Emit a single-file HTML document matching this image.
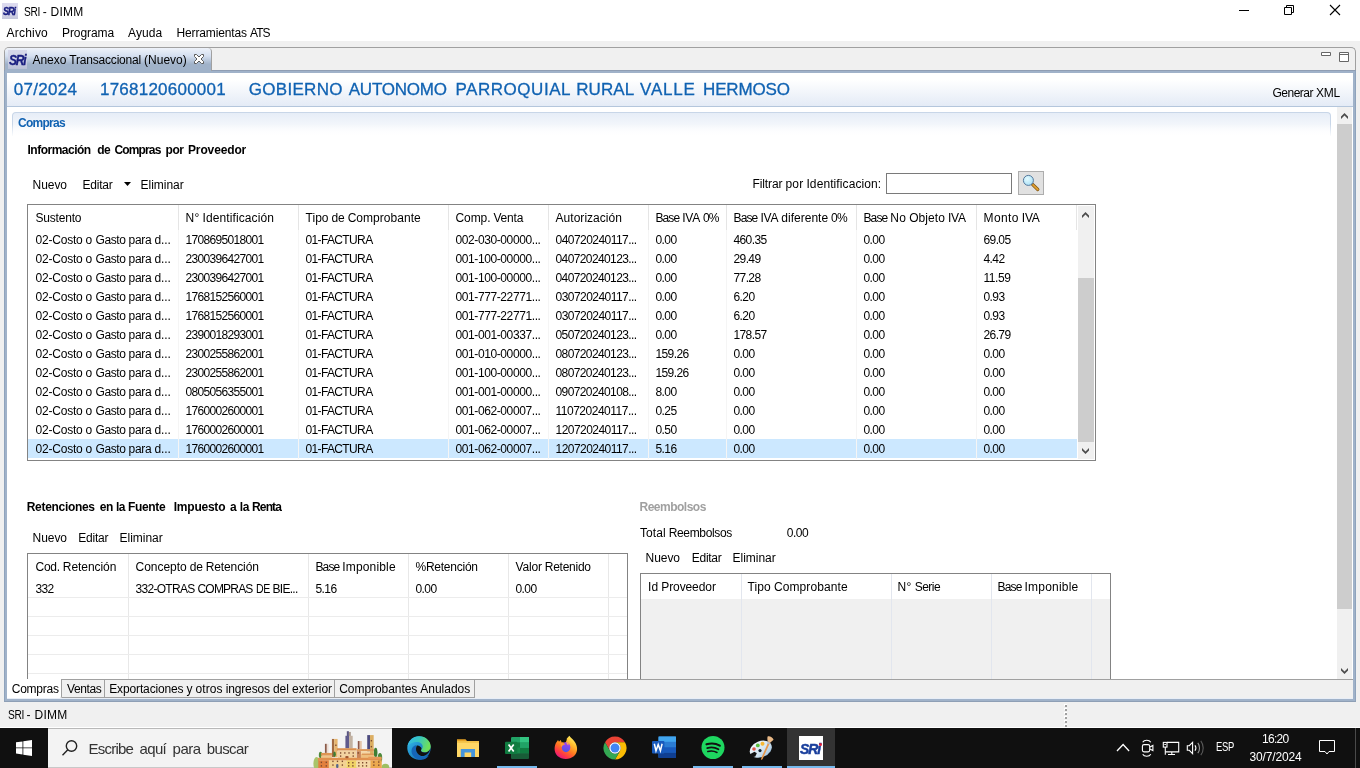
<!DOCTYPE html>
<html lang="es"><head><meta charset="utf-8"><title>SRI - DIMM</title>
<style>
*{box-sizing:border-box;margin:0;padding:0}
html,body{width:1360px;height:768px;overflow:hidden;background:#f0f0f0}
body{position:relative;will-change:transform;font-family:"Liberation Sans",sans-serif;font-size:12px;color:#000;line-height:16px}
.a{position:absolute;white-space:nowrap}
.t{position:absolute;white-space:pre;height:16px;line-height:16px}
.b{font-weight:bold}
svg{position:absolute;overflow:visible}
.vl{position:absolute;width:1px;background:#e5e5e5}
.hl{position:absolute;height:1px;background:#ececec}
</style></head>
<body>
<div class="a" style="left:0px;top:0px;width:1360px;height:41px;background:#fff"></div>
<div class="a" style="left:2px;top:3px;width:16px;height:16px;background:linear-gradient(#dddbef 0%,#d6d5ea 60%,#c4c6da 100%);overflow:hidden"><span class="a" style="left:1.2px;top:3.5px;font-size:10px;line-height:10px;font-weight:bold;font-style:italic;color:#1a1f80;-webkit-text-stroke:0.35px #1a1f80;letter-spacing:-1.1px;transform-origin:0 0;transform:scaleX(0.9)">SRi</span></div>
<div class="t" style="left:23.80px;top:4px;"><span style="display:inline-block;letter-spacing:-0.4px;transform-origin:0 0;transform:scaleX(0.8453);margin-right:-2.909px">SRI</span><span style="letter-spacing:-0.369px"> </span><span style="letter-spacing:0.969px">-</span><span style="letter-spacing:-0.369px"> </span><span style="letter-spacing:0.217px">DIMM</span></div>
<svg style="left:1230px;top:0" width="130" height="22" viewBox="0 0 130 22"><path d="M9 10.500h10" stroke="#000" stroke-width="1" fill="none"/><path d="M54.500 7.500h7v7h-7z M56.500 7.500v-2h7v7h-2" stroke="#000" stroke-width="1" fill="none"/><path d="M100 5l10 10M110 5l-10 10" stroke="#000" stroke-width="1.1" fill="none"/></svg>
<div class="t" style="left:6.60px;top:25px;letter-spacing:0.191px">Archivo</div>
<div class="t" style="left:62.00px;top:25px;letter-spacing:-0.067px">Programa</div>
<div class="t" style="left:128.00px;top:25px;letter-spacing:0.088px">Ayuda</div>
<div class="t" style="left:176.50px;top:25px;"><span style="letter-spacing:-0.132px">Herramientas</span><span style="letter-spacing:-0.381px"> </span><span style="letter-spacing:-0.863px">ATS</span></div>
<div class="a" style="left:4px;top:47px;width:1352px;height:655px;background:#f0f0f0;border:1px solid #a0a0a0;border-radius:5px 5px 0 0;border-bottom:none"></div>
<div class="a" style="left:4px;top:70px;width:1352px;height:632px;background:#a0b2c9;border-left:1px solid #8fa3bc;border-right:1px solid #8fa3bc"></div>
<div class="a" style="left:4px;top:70px;width:1352px;height:1px;background:#8f9db3"></div>
<div class="a" style="left:5px;top:48px;width:207px;height:23px;background:linear-gradient(#eef2f9 0%,#d4dff0 35%,#a0b2c9 70%,#a0b2c9 100%);border-radius:4px 4px 0 0;border-right:1px solid #a0a0a0"></div>
<div class="a" style="left:8px;top:50px;width:19px;height:19px;background:linear-gradient(#d6d8ea 0%,#cdd0e4 60%,#b9c0d6 100%);overflow:hidden"><span class="a" style="left:1px;top:2.5px;font-size:14px;line-height:14px;font-weight:bold;font-style:italic;color:#1a1f80;-webkit-text-stroke:0.35px #1a1f80;letter-spacing:-1.5px;transform-origin:0 0;transform:scaleX(0.86)">SRi</span></div>
<div class="t" style="left:32.50px;top:52px;"><span style="letter-spacing:-0.033px">Anexo</span><span style="letter-spacing:-0.362px"> </span><span style="letter-spacing:-0.201px">Transaccional</span><span style="letter-spacing:-0.362px"> </span><span style="letter-spacing:0.018px">(Nuevo)</span></div>
<svg style="left:194px;top:54px" width="10" height="10" viewBox="0 0 10 10"><path d="M.5.500h2l2.500 2.500 2.500-2.500h2v2L7 5l2.500 2.500v2h-2L5 7 2.500 9.500h-2v-2L3 5 .5 2.500z" fill="#fff" stroke="#5a5a5a" stroke-width="1"/></svg>
<svg style="left:1320px;top:51px" width="32" height="14" viewBox="0 0 32 14"><path d="M1.500 1.500h9v3h-9z" fill="#fff" stroke="#666"/><path d="M19.500 1.500h9v9h-9z M19.500 3.500h9" fill="#fff" stroke="#666"/></svg>
<div class="a" style="left:7px;top:73px;width:1346px;height:606px;background:#fff"></div>
<div class="a" style="left:7px;top:73px;width:1346px;height:33px;background:linear-gradient(#ffffff 0%,#ffffff 20%,#e4ebf6 100%)"></div>
<div class="a" style="left:7px;top:106px;width:1346px;height:1px;background:#b4c6dc"></div>
<div class="t" style="left:0;top:78px;font-size:17px;height:23px;line-height:23px;color:#1062b2;-webkit-text-stroke:0.3px #1062b2;"><span style="position:absolute;left:13.75px;letter-spacing:0.292px">07/2024</span> <span style="position:absolute;left:100.00px;letter-spacing:0.232px">1768120600001</span> <span style="position:absolute;left:248.75px;letter-spacing:0.300px">GOBIERNO</span> <span style="position:absolute;left:348.75px;letter-spacing:-0.226px">AUTONOMO</span> <span style="position:absolute;left:455.50px;letter-spacing:0.527px">PARROQUIAL</span> <span style="position:absolute;left:576.25px;letter-spacing:0.082px">RURAL</span> <span style="position:absolute;left:640.00px;letter-spacing:0.824px">VALLE</span> <span style="position:absolute;left:703.00px;letter-spacing:-0.145px">HERMOSO</span></div>
<div class="t" style="left:1272.50px;top:85px;"><span style="letter-spacing:-0.500px">Generar</span><span style="letter-spacing:-0.402px"> </span><span style="letter-spacing:-0.293px">XML</span></div>
<div class="a" style="left:1337px;top:107px;width:15px;height:572px;background:#f0f0f0"></div>
<div class="a" style="left:1337px;top:124px;width:15px;height:485px;background:#cdcdcd"></div>
<svg style="left:0;top:0" width="1360" height="768" viewBox="0 0 1360 768"><path d="M1341.0 116.5L1344.5 113L1348.0 116.5V119L1344.5 115.5L1341.0 119z" fill="#4d4d4d"/><path d="M1341.0 668L1344.5 671.5L1348.0 668V670.5L1344.5 674L1341.0 670.5z" fill="#4d4d4d"/></svg>
<div class="a" style="left:12px;top:112px;width:1319px;height:24px;border:1px solid #c8d6e8;border-bottom:none;border-radius:4px 4px 0 0;background:linear-gradient(#e6edf7 0%,#ffffff 100%)"></div>
<div class="a" style="left:12px;top:124px;width:1319px;height:13px;background:linear-gradient(to bottom,rgba(255,255,255,0),#fff)"></div>
<div class="t b" style="left:18.00px;top:115px;color:#1062b2;letter-spacing:-0.744px">Compras</div>
<div class="t b" style="left:0;top:142px;"><span style="position:absolute;left:27.50px;letter-spacing:-0.497px">Información</span> <span style="position:absolute;left:97.27px;letter-spacing:-0.499px">de</span> <span style="position:absolute;left:114.50px;letter-spacing:-0.869px">Compras</span> <span style="position:absolute;left:165.61px;letter-spacing:-0.499px">por</span> <span style="position:absolute;left:188.00px;letter-spacing:-0.133px">Proveedor</span></div>
<div class="t" style="left:32.50px;top:177px;letter-spacing:-0.038px">Nuevo</div>
<div class="t" style="left:82.50px;top:177px;letter-spacing:-0.225px">Editar</div>
<div class="t" style="left:140.50px;top:177px;letter-spacing:-0.011px">Eliminar</div>
<svg style="left:124px;top:182px" width="7" height="4" viewBox="0 0 7 4"><path d="M0 0h7l-3.500 4z" fill="#000"/></svg>
<div class="t" style="left:752.50px;top:176px;"><span style="letter-spacing:-0.104px">Filtrar</span><span style="letter-spacing:-0.343px"> </span><span style="letter-spacing:0.209px">por</span><span style="letter-spacing:-0.343px"> </span><span style="letter-spacing:0.099px">Identificacion:</span></div>
<div class="a" style="left:886px;top:173px;width:126px;height:21px;background:#fff;border:1px solid #7a7a7a"></div>
<div class="a" style="left:1018px;top:171px;width:26px;height:24px;background:#e1e1e1;border:1px solid #adadad"></div>
<svg style="left:1021px;top:174px" width="20" height="18" viewBox="0 0 20 18"><defs><radialGradient id="mg" cx="0.4" cy="0.35" r="0.7"><stop offset="0" stop-color="#e4fbff"/><stop offset="1" stop-color="#a9e0f6"/></radialGradient></defs><path d="M11.500 10.300l5.300 5.200" stroke="#7a5214" stroke-width="3.200" stroke-linecap="round"/><path d="M12 10.800l4.800 4.700" stroke="#e0a030" stroke-width="1.800" stroke-linecap="round"/><circle cx="7.400" cy="6.400" r="5" fill="url(#mg)" stroke="#55789c" stroke-width="1"/></svg>
<div class="a" style="left:27px;top:204px;width:1069px;height:257px;background:#fff;border:1px solid #838383"></div>
<div class="t" style="left:35.50px;top:210px;letter-spacing:-0.202px">Sustento</div>
<div class="t" style="left:185.50px;top:210px;"><span style="letter-spacing:0.238px">N°</span><span style="letter-spacing:-0.363px"> </span><span style="letter-spacing:0.110px">Identificación</span></div>
<div class="t" style="left:305.50px;top:210px;"><span style="letter-spacing:0.039px">Tipo</span><span style="letter-spacing:-0.321px"> </span><span style="letter-spacing:-0.161px">de</span><span style="letter-spacing:-0.321px"> </span><span style="letter-spacing:0.040px">Comprobante</span></div>
<div class="t" style="left:455.50px;top:210px;"><span style="letter-spacing:-0.091px">Comp.</span><span style="letter-spacing:-0.357px"> </span><span style="letter-spacing:-0.162px">Venta</span></div>
<div class="t" style="left:555.50px;top:210px;letter-spacing:0.039px">Autorización</div>
<div class="t" style="left:655.50px;top:210px;"><span style="letter-spacing:-0.906px">Base</span><span style="letter-spacing:-0.402px"> </span><span style="letter-spacing:-0.219px">IVA</span><span style="letter-spacing:-0.402px"> </span><span style="letter-spacing:-0.740px">0%</span></div>
<div class="t" style="left:733.50px;top:210px;"><span style="letter-spacing:-0.862px">Base</span><span style="letter-spacing:-0.358px"> </span><span style="letter-spacing:-0.174px">IVA</span><span style="letter-spacing:-0.358px"> </span><span style="letter-spacing:0.010px">diferente</span><span style="letter-spacing:-0.358px"> </span><span style="letter-spacing:-0.696px">0%</span></div>
<div class="t" style="left:863.50px;top:210px;"><span style="letter-spacing:-0.880px">Base</span><span style="letter-spacing:-0.376px"> </span><span style="letter-spacing:0.288px">No</span><span style="letter-spacing:-0.376px"> </span><span style="letter-spacing:0.066px">Objeto</span><span style="letter-spacing:-0.376px"> </span><span style="letter-spacing:-0.192px">IVA</span></div>
<div class="t" style="left:983.50px;top:210px;"><span style="letter-spacing:0.419px">Monto</span><span style="letter-spacing:-0.445px"> </span><span style="letter-spacing:-0.262px">IVA</span></div>
<div class="vl" style="left:178px;top:205px;height:25px"></div>
<div class="vl" style="left:298px;top:205px;height:25px"></div>
<div class="vl" style="left:448px;top:205px;height:25px"></div>
<div class="vl" style="left:548px;top:205px;height:25px"></div>
<div class="vl" style="left:648px;top:205px;height:25px"></div>
<div class="vl" style="left:726px;top:205px;height:25px"></div>
<div class="vl" style="left:856px;top:205px;height:25px"></div>
<div class="vl" style="left:976px;top:205px;height:25px"></div>
<div class="vl" style="left:1076px;top:205px;height:25px"></div>
<div class="t" style="left:35.50px;top:232px;"><span style="letter-spacing:-0.211px">02-Costo</span><span style="letter-spacing:-0.334px"> </span><span style="letter-spacing:0.326px">o</span><span style="letter-spacing:-0.334px"> </span><span style="letter-spacing:-0.403px">Gasto</span><span style="letter-spacing:-0.334px"> </span><span style="letter-spacing:-0.254px">para</span><span style="letter-spacing:-0.334px"> </span><span style="letter-spacing:-0.169px">d...</span></div>
<div class="t" style="left:185.50px;top:232px;letter-spacing:-0.674px">1708695018001</div>
<div class="t" style="left:305.50px;top:232px;letter-spacing:-0.635px">01-FACTURA</div>
<div class="t" style="left:455.50px;top:232px;letter-spacing:-0.400px">002-030-00000...</div>
<div class="t" style="left:555.50px;top:232px;letter-spacing:-0.546px">040720240117...</div>
<div class="t" style="left:655.50px;top:232px;letter-spacing:-0.589px">0.00</div>
<div class="t" style="left:733.50px;top:232px;letter-spacing:-0.617px">460.35</div>
<div class="t" style="left:863.50px;top:232px;letter-spacing:-0.589px">0.00</div>
<div class="t" style="left:983.50px;top:232px;letter-spacing:-0.606px">69.05</div>
<div class="t" style="left:35.50px;top:251px;"><span style="letter-spacing:-0.211px">02-Costo</span><span style="letter-spacing:-0.334px"> </span><span style="letter-spacing:0.326px">o</span><span style="letter-spacing:-0.334px"> </span><span style="letter-spacing:-0.403px">Gasto</span><span style="letter-spacing:-0.334px"> </span><span style="letter-spacing:-0.254px">para</span><span style="letter-spacing:-0.334px"> </span><span style="letter-spacing:-0.169px">d...</span></div>
<div class="t" style="left:185.50px;top:251px;letter-spacing:-0.674px">2300396427001</div>
<div class="t" style="left:305.50px;top:251px;letter-spacing:-0.635px">01-FACTURA</div>
<div class="t" style="left:455.50px;top:251px;letter-spacing:-0.400px">001-100-00000...</div>
<div class="t" style="left:555.50px;top:251px;letter-spacing:-0.606px">040720240123...</div>
<div class="t" style="left:655.50px;top:251px;letter-spacing:-0.589px">0.00</div>
<div class="t" style="left:733.50px;top:251px;letter-spacing:-0.606px">29.49</div>
<div class="t" style="left:863.50px;top:251px;letter-spacing:-0.589px">0.00</div>
<div class="t" style="left:983.50px;top:251px;letter-spacing:-0.589px">4.42</div>
<div class="t" style="left:35.50px;top:270px;"><span style="letter-spacing:-0.211px">02-Costo</span><span style="letter-spacing:-0.334px"> </span><span style="letter-spacing:0.326px">o</span><span style="letter-spacing:-0.334px"> </span><span style="letter-spacing:-0.403px">Gasto</span><span style="letter-spacing:-0.334px"> </span><span style="letter-spacing:-0.254px">para</span><span style="letter-spacing:-0.334px"> </span><span style="letter-spacing:-0.169px">d...</span></div>
<div class="t" style="left:185.50px;top:270px;letter-spacing:-0.674px">2300396427001</div>
<div class="t" style="left:305.50px;top:270px;letter-spacing:-0.635px">01-FACTURA</div>
<div class="t" style="left:455.50px;top:270px;letter-spacing:-0.400px">001-100-00000...</div>
<div class="t" style="left:555.50px;top:270px;letter-spacing:-0.606px">040720240123...</div>
<div class="t" style="left:655.50px;top:270px;letter-spacing:-0.589px">0.00</div>
<div class="t" style="left:733.50px;top:270px;letter-spacing:-0.606px">77.28</div>
<div class="t" style="left:863.50px;top:270px;letter-spacing:-0.589px">0.00</div>
<div class="t" style="left:983.50px;top:270px;letter-spacing:-0.428px">11.59</div>
<div class="t" style="left:35.50px;top:289px;"><span style="letter-spacing:-0.211px">02-Costo</span><span style="letter-spacing:-0.334px"> </span><span style="letter-spacing:0.326px">o</span><span style="letter-spacing:-0.334px"> </span><span style="letter-spacing:-0.403px">Gasto</span><span style="letter-spacing:-0.334px"> </span><span style="letter-spacing:-0.254px">para</span><span style="letter-spacing:-0.334px"> </span><span style="letter-spacing:-0.169px">d...</span></div>
<div class="t" style="left:185.50px;top:289px;letter-spacing:-0.674px">1768152560001</div>
<div class="t" style="left:305.50px;top:289px;letter-spacing:-0.635px">01-FACTURA</div>
<div class="t" style="left:455.50px;top:289px;letter-spacing:-0.400px">001-777-22771...</div>
<div class="t" style="left:555.50px;top:289px;letter-spacing:-0.546px">030720240117...</div>
<div class="t" style="left:655.50px;top:289px;letter-spacing:-0.589px">0.00</div>
<div class="t" style="left:733.50px;top:289px;letter-spacing:-0.589px">6.20</div>
<div class="t" style="left:863.50px;top:289px;letter-spacing:-0.589px">0.00</div>
<div class="t" style="left:983.50px;top:289px;letter-spacing:-0.589px">0.93</div>
<div class="t" style="left:35.50px;top:308px;"><span style="letter-spacing:-0.211px">02-Costo</span><span style="letter-spacing:-0.334px"> </span><span style="letter-spacing:0.326px">o</span><span style="letter-spacing:-0.334px"> </span><span style="letter-spacing:-0.403px">Gasto</span><span style="letter-spacing:-0.334px"> </span><span style="letter-spacing:-0.254px">para</span><span style="letter-spacing:-0.334px"> </span><span style="letter-spacing:-0.169px">d...</span></div>
<div class="t" style="left:185.50px;top:308px;letter-spacing:-0.674px">1768152560001</div>
<div class="t" style="left:305.50px;top:308px;letter-spacing:-0.635px">01-FACTURA</div>
<div class="t" style="left:455.50px;top:308px;letter-spacing:-0.400px">001-777-22771...</div>
<div class="t" style="left:555.50px;top:308px;letter-spacing:-0.546px">030720240117...</div>
<div class="t" style="left:655.50px;top:308px;letter-spacing:-0.589px">0.00</div>
<div class="t" style="left:733.50px;top:308px;letter-spacing:-0.589px">6.20</div>
<div class="t" style="left:863.50px;top:308px;letter-spacing:-0.589px">0.00</div>
<div class="t" style="left:983.50px;top:308px;letter-spacing:-0.589px">0.93</div>
<div class="t" style="left:35.50px;top:327px;"><span style="letter-spacing:-0.211px">02-Costo</span><span style="letter-spacing:-0.334px"> </span><span style="letter-spacing:0.326px">o</span><span style="letter-spacing:-0.334px"> </span><span style="letter-spacing:-0.403px">Gasto</span><span style="letter-spacing:-0.334px"> </span><span style="letter-spacing:-0.254px">para</span><span style="letter-spacing:-0.334px"> </span><span style="letter-spacing:-0.169px">d...</span></div>
<div class="t" style="left:185.50px;top:327px;letter-spacing:-0.674px">2390018293001</div>
<div class="t" style="left:305.50px;top:327px;letter-spacing:-0.635px">01-FACTURA</div>
<div class="t" style="left:455.50px;top:327px;letter-spacing:-0.400px">001-001-00337...</div>
<div class="t" style="left:555.50px;top:327px;letter-spacing:-0.606px">050720240123...</div>
<div class="t" style="left:655.50px;top:327px;letter-spacing:-0.589px">0.00</div>
<div class="t" style="left:733.50px;top:327px;letter-spacing:-0.617px">178.57</div>
<div class="t" style="left:863.50px;top:327px;letter-spacing:-0.589px">0.00</div>
<div class="t" style="left:983.50px;top:327px;letter-spacing:-0.606px">26.79</div>
<div class="t" style="left:35.50px;top:346px;"><span style="letter-spacing:-0.211px">02-Costo</span><span style="letter-spacing:-0.334px"> </span><span style="letter-spacing:0.326px">o</span><span style="letter-spacing:-0.334px"> </span><span style="letter-spacing:-0.403px">Gasto</span><span style="letter-spacing:-0.334px"> </span><span style="letter-spacing:-0.254px">para</span><span style="letter-spacing:-0.334px"> </span><span style="letter-spacing:-0.169px">d...</span></div>
<div class="t" style="left:185.50px;top:346px;letter-spacing:-0.674px">2300255862001</div>
<div class="t" style="left:305.50px;top:346px;letter-spacing:-0.635px">01-FACTURA</div>
<div class="t" style="left:455.50px;top:346px;letter-spacing:-0.400px">001-010-00000...</div>
<div class="t" style="left:555.50px;top:346px;letter-spacing:-0.606px">080720240123...</div>
<div class="t" style="left:655.50px;top:346px;letter-spacing:-0.617px">159.26</div>
<div class="t" style="left:733.50px;top:346px;letter-spacing:-0.589px">0.00</div>
<div class="t" style="left:863.50px;top:346px;letter-spacing:-0.589px">0.00</div>
<div class="t" style="left:983.50px;top:346px;letter-spacing:-0.589px">0.00</div>
<div class="t" style="left:35.50px;top:365px;"><span style="letter-spacing:-0.211px">02-Costo</span><span style="letter-spacing:-0.334px"> </span><span style="letter-spacing:0.326px">o</span><span style="letter-spacing:-0.334px"> </span><span style="letter-spacing:-0.403px">Gasto</span><span style="letter-spacing:-0.334px"> </span><span style="letter-spacing:-0.254px">para</span><span style="letter-spacing:-0.334px"> </span><span style="letter-spacing:-0.169px">d...</span></div>
<div class="t" style="left:185.50px;top:365px;letter-spacing:-0.674px">2300255862001</div>
<div class="t" style="left:305.50px;top:365px;letter-spacing:-0.635px">01-FACTURA</div>
<div class="t" style="left:455.50px;top:365px;letter-spacing:-0.400px">001-100-00000...</div>
<div class="t" style="left:555.50px;top:365px;letter-spacing:-0.606px">080720240123...</div>
<div class="t" style="left:655.50px;top:365px;letter-spacing:-0.617px">159.26</div>
<div class="t" style="left:733.50px;top:365px;letter-spacing:-0.589px">0.00</div>
<div class="t" style="left:863.50px;top:365px;letter-spacing:-0.589px">0.00</div>
<div class="t" style="left:983.50px;top:365px;letter-spacing:-0.589px">0.00</div>
<div class="t" style="left:35.50px;top:384px;"><span style="letter-spacing:-0.211px">02-Costo</span><span style="letter-spacing:-0.334px"> </span><span style="letter-spacing:0.326px">o</span><span style="letter-spacing:-0.334px"> </span><span style="letter-spacing:-0.403px">Gasto</span><span style="letter-spacing:-0.334px"> </span><span style="letter-spacing:-0.254px">para</span><span style="letter-spacing:-0.334px"> </span><span style="letter-spacing:-0.169px">d...</span></div>
<div class="t" style="left:185.50px;top:384px;letter-spacing:-0.674px">0805056355001</div>
<div class="t" style="left:305.50px;top:384px;letter-spacing:-0.635px">01-FACTURA</div>
<div class="t" style="left:455.50px;top:384px;letter-spacing:-0.400px">001-001-00000...</div>
<div class="t" style="left:555.50px;top:384px;letter-spacing:-0.606px">090720240108...</div>
<div class="t" style="left:655.50px;top:384px;letter-spacing:-0.589px">8.00</div>
<div class="t" style="left:733.50px;top:384px;letter-spacing:-0.589px">0.00</div>
<div class="t" style="left:863.50px;top:384px;letter-spacing:-0.589px">0.00</div>
<div class="t" style="left:983.50px;top:384px;letter-spacing:-0.589px">0.00</div>
<div class="t" style="left:35.50px;top:403px;"><span style="letter-spacing:-0.211px">02-Costo</span><span style="letter-spacing:-0.334px"> </span><span style="letter-spacing:0.326px">o</span><span style="letter-spacing:-0.334px"> </span><span style="letter-spacing:-0.403px">Gasto</span><span style="letter-spacing:-0.334px"> </span><span style="letter-spacing:-0.254px">para</span><span style="letter-spacing:-0.334px"> </span><span style="letter-spacing:-0.169px">d...</span></div>
<div class="t" style="left:185.50px;top:403px;letter-spacing:-0.674px">1760002600001</div>
<div class="t" style="left:305.50px;top:403px;letter-spacing:-0.635px">01-FACTURA</div>
<div class="t" style="left:455.50px;top:403px;letter-spacing:-0.400px">001-062-00007...</div>
<div class="t" style="left:555.50px;top:403px;letter-spacing:-0.487px">110720240117...</div>
<div class="t" style="left:655.50px;top:403px;letter-spacing:-0.589px">0.25</div>
<div class="t" style="left:733.50px;top:403px;letter-spacing:-0.589px">0.00</div>
<div class="t" style="left:863.50px;top:403px;letter-spacing:-0.589px">0.00</div>
<div class="t" style="left:983.50px;top:403px;letter-spacing:-0.589px">0.00</div>
<div class="t" style="left:35.50px;top:422px;"><span style="letter-spacing:-0.211px">02-Costo</span><span style="letter-spacing:-0.334px"> </span><span style="letter-spacing:0.326px">o</span><span style="letter-spacing:-0.334px"> </span><span style="letter-spacing:-0.403px">Gasto</span><span style="letter-spacing:-0.334px"> </span><span style="letter-spacing:-0.254px">para</span><span style="letter-spacing:-0.334px"> </span><span style="letter-spacing:-0.169px">d...</span></div>
<div class="t" style="left:185.50px;top:422px;letter-spacing:-0.674px">1760002600001</div>
<div class="t" style="left:305.50px;top:422px;letter-spacing:-0.635px">01-FACTURA</div>
<div class="t" style="left:455.50px;top:422px;letter-spacing:-0.400px">001-062-00007...</div>
<div class="t" style="left:555.50px;top:422px;letter-spacing:-0.546px">120720240117...</div>
<div class="t" style="left:655.50px;top:422px;letter-spacing:-0.589px">0.50</div>
<div class="t" style="left:733.50px;top:422px;letter-spacing:-0.589px">0.00</div>
<div class="t" style="left:863.50px;top:422px;letter-spacing:-0.589px">0.00</div>
<div class="t" style="left:983.50px;top:422px;letter-spacing:-0.589px">0.00</div>
<div class="a" style="left:28px;top:439px;width:1049px;height:19px;background:#cce8ff"></div>
<div class="t" style="left:35.50px;top:441px;"><span style="letter-spacing:-0.211px">02-Costo</span><span style="letter-spacing:-0.334px"> </span><span style="letter-spacing:0.326px">o</span><span style="letter-spacing:-0.334px"> </span><span style="letter-spacing:-0.403px">Gasto</span><span style="letter-spacing:-0.334px"> </span><span style="letter-spacing:-0.254px">para</span><span style="letter-spacing:-0.334px"> </span><span style="letter-spacing:-0.169px">d...</span></div>
<div class="t" style="left:185.50px;top:441px;letter-spacing:-0.674px">1760002600001</div>
<div class="t" style="left:305.50px;top:441px;letter-spacing:-0.635px">01-FACTURA</div>
<div class="t" style="left:455.50px;top:441px;letter-spacing:-0.400px">001-062-00007...</div>
<div class="t" style="left:555.50px;top:441px;letter-spacing:-0.546px">120720240117...</div>
<div class="t" style="left:655.50px;top:441px;letter-spacing:-0.589px">5.16</div>
<div class="t" style="left:733.50px;top:441px;letter-spacing:-0.589px">0.00</div>
<div class="t" style="left:863.50px;top:441px;letter-spacing:-0.589px">0.00</div>
<div class="t" style="left:983.50px;top:441px;letter-spacing:-0.589px">0.00</div>
<div class="vl" style="left:178px;top:230px;height:229px;background:#f5f5f5"></div>
<div class="vl" style="left:298px;top:230px;height:229px;background:#f5f5f5"></div>
<div class="vl" style="left:448px;top:230px;height:229px;background:#f5f5f5"></div>
<div class="vl" style="left:548px;top:230px;height:229px;background:#f5f5f5"></div>
<div class="vl" style="left:648px;top:230px;height:229px;background:#f5f5f5"></div>
<div class="vl" style="left:726px;top:230px;height:229px;background:#f5f5f5"></div>
<div class="vl" style="left:856px;top:230px;height:229px;background:#f5f5f5"></div>
<div class="vl" style="left:976px;top:230px;height:229px;background:#f5f5f5"></div>
<div class="a" style="left:1078px;top:206px;width:16px;height:253px;background:#f0f0f0"></div>
<div class="a" style="left:1078px;top:278px;width:16px;height:164px;background:#cdcdcd"></div>
<svg style="left:0;top:0" width="1360" height="768" viewBox="0 0 1360 768"><path d="M1082.0 215.5L1085.5 212L1089.0 215.5V218L1085.5 214.5L1082.0 218z" fill="#4d4d4d"/><path d="M1082.0 448L1085.5 451.5L1089.0 448V450.5L1085.5 454L1082.0 450.5z" fill="#4d4d4d"/></svg>
<div class="t b" style="left:0;top:499px;"><span style="position:absolute;left:26.75px;letter-spacing:-0.306px">Retenciones</span> <span style="position:absolute;left:99.69px;letter-spacing:-0.437px">en</span> <span style="position:absolute;left:115.93px;letter-spacing:-0.437px">la</span> <span style="position:absolute;left:128.00px;letter-spacing:-0.357px">Fuente</span> <span style="position:absolute;left:173.75px;letter-spacing:-0.233px">Impuesto</span> <span style="position:absolute;left:230.12px;letter-spacing:-0.437px">a</span> <span style="position:absolute;left:239.80px;letter-spacing:-0.437px">la</span> <span style="position:absolute;left:252.00px;letter-spacing:-0.854px">Renta</span></div>
<div class="t" style="left:32.50px;top:530px;letter-spacing:-0.038px">Nuevo</div>
<div class="t" style="left:78.25px;top:530px;letter-spacing:-0.225px">Editar</div>
<div class="t" style="left:119.50px;top:530px;letter-spacing:-0.011px">Eliminar</div>
<div class="a" style="left:27px;top:553px;width:601px;height:126px;background:#fff;border:1px solid #838383;border-bottom:none"></div>
<div class="t" style="left:35.50px;top:559px;"><span style="letter-spacing:-0.283px">Cod.</span><span style="letter-spacing:-0.280px"> </span><span style="letter-spacing:-0.061px">Retención</span></div>
<div class="t" style="left:135.50px;top:559px;"><span style="letter-spacing:-0.034px">Concepto</span><span style="letter-spacing:-0.322px"> </span><span style="letter-spacing:-0.162px">de</span><span style="letter-spacing:-0.322px"> </span><span style="letter-spacing:-0.103px">Retención</span></div>
<div class="t" style="left:315.50px;top:559px;"><span style="letter-spacing:-0.891px">Base</span><span style="letter-spacing:-0.388px"> </span><span style="letter-spacing:0.165px">Imponible</span></div>
<div class="t" style="left:415.50px;top:559px;letter-spacing:-0.246px">%Retención</div>
<div class="t" style="left:515.50px;top:559px;"><span style="letter-spacing:-0.150px">Valor</span><span style="letter-spacing:-0.459px"> </span><span style="letter-spacing:-0.254px">Retenido</span></div>
<div class="vl" style="left:128px;top:554px;height:125px;background:#e8e8e8"></div>
<div class="vl" style="left:308px;top:554px;height:125px;background:#e8e8e8"></div>
<div class="vl" style="left:408px;top:554px;height:125px;background:#e8e8e8"></div>
<div class="vl" style="left:508px;top:554px;height:125px;background:#e8e8e8"></div>
<div class="vl" style="left:608px;top:554px;height:125px;background:#e8e8e8"></div>
<div class="hl" style="left:28px;top:597px;width:599px"></div>
<div class="hl" style="left:28px;top:616px;width:599px"></div>
<div class="hl" style="left:28px;top:635px;width:599px"></div>
<div class="hl" style="left:28px;top:654px;width:599px"></div>
<div class="hl" style="left:28px;top:673px;width:599px"></div>
<div class="t" style="left:35.50px;top:581px;letter-spacing:-0.674px">332</div>
<div class="t" style="left:135.50px;top:581px;"><span style="letter-spacing:-0.706px">332-OTRAS</span><span style="letter-spacing:-0.334px"> </span><span style="letter-spacing:-0.811px">COMPRAS</span><span style="letter-spacing:-0.334px"> </span><span style="display:inline-block;letter-spacing:-0.4px;transform-origin:0 0;transform:scaleX(0.8822);margin-right:-1.870px">DE</span><span style="letter-spacing:-0.334px"> </span><span style="letter-spacing:-0.724px">BIE...</span></div>
<div class="t" style="left:315.50px;top:581px;letter-spacing:-0.589px">5.16</div>
<div class="t" style="left:415.50px;top:581px;letter-spacing:-0.589px">0.00</div>
<div class="t" style="left:515.50px;top:581px;letter-spacing:-0.589px">0.00</div>
<div class="t b" style="left:639.50px;top:499px;color:#a0a0a0;letter-spacing:-0.506px">Reembolsos</div>
<div class="t" style="left:640.00px;top:525px;"><span style="letter-spacing:0.068px">Total</span><span style="letter-spacing:-0.396px"> </span><span style="letter-spacing:-0.332px">Reembolsos</span></div>
<div class="t" style="left:786.75px;top:525px;letter-spacing:-0.464px">0.00</div>
<div class="t" style="left:645.50px;top:550px;letter-spacing:-0.038px">Nuevo</div>
<div class="t" style="left:691.75px;top:550px;letter-spacing:-0.266px">Editar</div>
<div class="t" style="left:732.50px;top:550px;letter-spacing:-0.011px">Eliminar</div>
<div class="a" style="left:640px;top:573px;width:471px;height:106px;background:#f0f0f0;border:1px solid #838383;border-bottom:none"></div>
<div class="a" style="left:641px;top:574px;width:469px;height:25px;background:#fff"></div>
<div class="t" style="left:648.00px;top:579px;"><span style="letter-spacing:0.059px">Id</span><span style="letter-spacing:-0.271px"> </span><span style="letter-spacing:-0.089px">Proveedor</span></div>
<div class="t" style="left:747.50px;top:579px;"><span style="letter-spacing:0.104px">Tipo</span><span style="letter-spacing:-0.256px"> </span><span style="letter-spacing:0.105px">Comprobante</span></div>
<div class="t" style="left:897.50px;top:579px;"><span style="letter-spacing:0.330px">N°</span><span style="letter-spacing:-0.271px"> </span><span style="letter-spacing:-0.540px">Serie</span></div>
<div class="t" style="left:997.50px;top:579px;"><span style="letter-spacing:-0.838px">Base</span><span style="letter-spacing:-0.334px"> </span><span style="letter-spacing:0.219px">Imponible</span></div>
<div class="vl" style="left:741px;top:574px;height:105px;background:#e2e6ee"></div>
<div class="vl" style="left:891px;top:574px;height:105px;background:#e2e6ee"></div>
<div class="vl" style="left:991px;top:574px;height:105px;background:#e2e6ee"></div>
<div class="vl" style="left:1091px;top:574px;height:105px;background:#e2e6ee"></div>
<div class="a" style="left:7px;top:679px;width:1346px;height:20px;background:#f0f0f0;border-top:1px solid #a0a0a0"></div>
<div class="a" style="left:7px;top:679px;width:55px;height:20px;background:#fff;border-right:1px solid #a0a0a0;border-radius:0 0 3px 0"></div>
<div class="a" style="left:104px;top:680px;width:1px;height:18px;background:#a0a0a0"></div>
<div class="a" style="left:334px;top:680px;width:1px;height:18px;background:#a0a0a0"></div>
<div class="a" style="left:474px;top:680px;width:1px;height:18px;background:#a0a0a0"></div>
<div class="a" style="left:62px;top:697px;width:413px;height:1px;background:#a0a0a0"></div>
<div class="t" style="left:11.75px;top:681px;letter-spacing:-0.240px">Compras</div>
<div class="t" style="left:67.00px;top:681px;letter-spacing:-0.408px">Ventas</div>
<div class="t" style="left:109.25px;top:681px;"><span style="letter-spacing:-0.140px">Exportaciones</span><span style="letter-spacing:-0.317px"> </span><span style="letter-spacing:0.017px">y</span><span style="letter-spacing:-0.317px"> </span><span style="letter-spacing:0.082px">otros</span><span style="letter-spacing:-0.317px"> </span><span style="letter-spacing:-0.152px">ingresos</span><span style="letter-spacing:-0.317px"> </span><span style="letter-spacing:0.013px">del</span><span style="letter-spacing:-0.317px"> </span><span style="letter-spacing:0.016px">exterior</span></div>
<div class="t" style="left:339.25px;top:681px;"><span style="letter-spacing:-0.059px">Comprobantes</span><span style="letter-spacing:-0.334px"> </span><span style="letter-spacing:-0.005px">Anulados</span></div>
<div class="a" style="left:7px;top:698px;width:1346px;height:1px;background:#e8eef7"></div>
<div class="a" style="left:4px;top:701px;width:1352px;height:1px;background:#8e9fb5"></div>
<div class="a" style="left:0px;top:703px;width:1360px;height:25px;background:#f0f0f0"></div>
<div class="t" style="left:7.50px;top:707px;"><span style="display:inline-block;letter-spacing:-0.4px;transform-origin:0 0;transform:scaleX(0.8509);margin-right:-2.804px">SRI</span><span style="letter-spacing:-0.334px"> </span><span style="letter-spacing:1.004px">-</span><span style="letter-spacing:-0.334px"> </span><span style="letter-spacing:0.252px">DIMM</span></div>
<div class="a" style="left:1064px;top:704px;width:3px;height:23px;background:repeating-linear-gradient(to bottom,#fff 0,#fff 1px,#a0a0a0 1px,#a0a0a0 3px,rgba(0,0,0,0) 3px,rgba(0,0,0,0) 4px);clip-path:none"></div>
<div class="a" style="left:1064px;top:704px;width:1px;height:23px;background:repeating-linear-gradient(to bottom,#fff 0,#fff 2px,#f0f0f0 2px,#f0f0f0 4px)"></div>
<div class="a" style="left:0px;top:727px;width:1360px;height:1px;background:#fff"></div>
<div class="a" style="left:0px;top:728px;width:1360px;height:40px;background:#101010"></div>
<svg style="left:16px;top:740px" width="16" height="16" viewBox="0 0 16 16"><path d="M0 2.300l6.500-.9v6.100H0zM7.300 1.300L16 0v7.500H7.300zM0 8.300h6.500v6.200L0 13.600zM7.300 8.300H16V16l-8.700-1.200z" fill="#fff"/></svg>
<div class="a" style="left:48px;top:728px;width:344px;height:40px;background:#f3f3f3;border-top:1px solid #b8b8b8;border-bottom:1px solid #c8c8c8"></div>
<svg style="left:61px;top:739px" width="18" height="18" viewBox="0 0 18 18"><circle cx="10.500" cy="7" r="5.200" fill="none" stroke="#222" stroke-width="1.400"/><path d="M6.800 10.800L1.500 16.200" stroke="#222" stroke-width="1.400"/></svg>
<div class="t" style="left:0;top:738.5px;font-size:15px;height:20px;line-height:20px;color:#333;"><span style="position:absolute;left:88.60px;letter-spacing:-0.775px">Escribe</span> <span style="position:absolute;left:139.60px;letter-spacing:-0.683px">aquí</span> <span style="position:absolute;left:172.60px;letter-spacing:-0.518px">para</span> <span style="position:absolute;left:206.80px;letter-spacing:-0.625px">buscar</span></div>
<svg style="left:305px;top:726px" width="87" height="42" viewBox="0 0 87 42"><g style="filter:blur(0.25px)"><ellipse cx="11.54" cy="37.76" rx="3.15" ry="6.64" fill="#a9c46a"/><ellipse cx="15.52" cy="29.02" rx="1.68" ry="3.15" fill="#4f8a3a"/><ellipse cx="80.42" cy="41.26" rx="3.85" ry="3.5" fill="#9dbf62"/><ellipse cx="70.63" cy="26.57" rx="1.82" ry="4.76" fill="#3f7d33"/><ellipse cx="74.97" cy="31.82" rx="2.24" ry="4.9" fill="#4c8a3c"/><rect x="19.93" y="17.83" width="1.89" height="9.09" fill="#8a5a48"/><rect x="21.82" y="17.83" width="1.75" height="9.09" fill="#ecdcd2"/><rect x="26.92" y="12.94" width="2.31" height="18.18" fill="#a06a42"/><rect x="29.23" y="12.94" width="3.36" height="18.18" fill="#e6b56e"/><rect x="41.82" y="5.24" width="2.1" height="5.25" fill="#5b5680"/><rect x="43.92" y="5.94" width="1.88" height="4.55" fill="#a9988c"/><rect x="40.42" y="9.79" width="3.64" height="12.59" fill="#5f5a8c"/><rect x="44.06" y="9.79" width="3.63" height="12.59" fill="#c2b2a2"/><rect x="52.8" y="15.03" width="1.89" height="8.4" fill="#8c5648"/><rect x="54.69" y="15.03" width="2.09" height="8.4" fill="#e3c4a8"/><rect x="62.24" y="9.09" width="2.79" height="21.33" fill="#4b4a7e"/><rect x="65.03" y="9.09" width="3.64" height="21.33" fill="#dcae62"/><ellipse cx="29.58" cy="28.32" rx="1.26" ry="2.94" fill="#3f7d33"/><rect x="31.82" y="22.24" width="19.79" height="2.38" fill="#d98f4e"/><rect x="32.87" y="24.62" width="18.53" height="7.69" fill="#f3d3a2"/><rect x="51.75" y="23.08" width="17.13" height="2.09" fill="#dd9a5c"/><rect x="51.75" y="25.17" width="4.19" height="7.14" fill="#c9855a"/><rect x="55.94" y="25.17" width="9.09" height="2.8" fill="#f5d6a4"/><rect x="55.94" y="27.97" width="12.94" height="4.34" fill="#eebf7e"/><rect x="56.99" y="27.62" width="11.89" height="1.19" fill="#d98f4e"/><rect x="16.08" y="26.92" width="10.84" height="2.8" fill="#de9552"/><rect x="16.08" y="29.72" width="10.84" height="2.59" fill="#eec58a"/><rect x="12.94" y="31.82" width="63.63" height="2.8" fill="#e0904e"/><rect x="13.29" y="34.41" width="10.63" height="7.62" fill="#e2803e"/><rect x="23.92" y="34.41" width="17.48" height="7.62" fill="#f3d292"/><rect x="41.4" y="34.41" width="10.21" height="7.62" fill="#f1d468"/><rect x="51.61" y="34.41" width="13.77" height="7.62" fill="#f5d8a6"/><rect x="65.38" y="34.41" width="11.4" height="7.62" fill="#eba84e"/><rect x="63.29" y="30.77" width="13.28" height="2.1" fill="#e89a58"/><rect x="34.97" y="26.22" width="1.32" height="1.47" fill="#7d4a30"/><rect x="39.16" y="26.22" width="1.33" height="1.47" fill="#7d4a30"/><rect x="43.36" y="26.22" width="1.33" height="1.47" fill="#7d4a30"/><rect x="47.55" y="26.22" width="1.33" height="1.47" fill="#7d4a30"/><rect x="34.97" y="29.37" width="1.32" height="1.47" fill="#7d4a30"/><rect x="47.55" y="29.37" width="1.33" height="1.47" fill="#7d4a30"/><rect x="15.73" y="35.66" width="1.33" height="1.47" fill="#7d4a30"/><rect x="20.63" y="35.66" width="1.33" height="1.47" fill="#7d4a30"/><rect x="15.73" y="39.16" width="1.33" height="1.47" fill="#7d4a30"/><rect x="20.63" y="39.16" width="1.33" height="1.47" fill="#7d4a30"/><rect x="27.27" y="34.62" width="1.33" height="1.46" fill="#7d4a30"/><rect x="31.82" y="34.62" width="1.33" height="1.46" fill="#7d4a30"/><rect x="36.71" y="34.62" width="1.33" height="1.46" fill="#7d4a30"/><rect x="27.27" y="38.32" width="1.33" height="1.47" fill="#7d4a30"/><rect x="36.71" y="38.32" width="1.33" height="1.47" fill="#7d4a30"/><rect x="43.01" y="36.01" width="1.33" height="1.47" fill="#7d4a30"/><rect x="47.2" y="36.01" width="1.33" height="1.47" fill="#7d4a30"/><rect x="43.01" y="39.16" width="1.33" height="1.47" fill="#7d4a30"/><rect x="47.2" y="39.16" width="1.33" height="1.47" fill="#7d4a30"/><rect x="53.15" y="36.01" width="1.33" height="1.47" fill="#7d4a30"/><rect x="56.99" y="36.01" width="1.33" height="1.47" fill="#7d4a30"/><rect x="60.84" y="36.01" width="1.33" height="1.47" fill="#7d4a30"/><rect x="53.15" y="39.16" width="1.33" height="1.47" fill="#7d4a30"/><rect x="56.99" y="39.16" width="1.33" height="1.47" fill="#7d4a30"/><rect x="60.84" y="39.16" width="1.33" height="1.47" fill="#7d4a30"/><rect x="68.18" y="35.31" width="1.33" height="1.47" fill="#7d4a30"/><rect x="73.08" y="35.31" width="1.33" height="1.47" fill="#7d4a30"/><rect x="68.18" y="38.46" width="1.33" height="1.47" fill="#7d4a30"/><rect x="73.08" y="38.46" width="1.33" height="1.47" fill="#7d4a30"/><rect x="65.73" y="13.99" width="1.33" height="1.46" fill="#7d4a30"/><rect x="65.73" y="19.93" width="1.33" height="1.47" fill="#7d4a30"/><rect x="30.21" y="18.53" width="1.33" height="1.47" fill="#7d4a30"/><rect x="52.59" y="26.22" width="1.33" height="1.47" fill="#7d4a30"/><rect x="40.21" y="29.93" width="3.5" height="2.38" fill="#a0552e" rx="1.5"/><rect x="31.12" y="38.11" width="2.31" height="3.92" fill="#54648c" rx="1"/></g></svg>
<div class="a" style="left:787px;top:728px;width:48px;height:40px;background:#333333"></div>
<svg style="left:407px;top:736px" width="24" height="24" viewBox="0 0 24 24">
<defs><linearGradient id="eg1" x1="0" y1="0" x2="1" y2="1"><stop offset="0" stop-color="#35c1f1"/><stop offset="1" stop-color="#0c59a4"/></linearGradient>
<linearGradient id="eg2" x1="0" y1="0" x2="1" y2="0.3"><stop offset="0" stop-color="#35b8ec"/><stop offset="0.5" stop-color="#36c6c0"/><stop offset="1" stop-color="#6ee05a"/></linearGradient></defs>
<circle cx="12" cy="12" r="11.700" fill="url(#eg1)"/>
<path d="M.6 10C2 4 7 .3 12 .3c7 0 11.700 5 11.700 10 0 4-3 6-6 6-3 0-4-1.500-3.500-2.500 1-1 1.500-2 1.500-3.500C15.700 8 13 6 10 6 6 6 2 8 .6 10z" fill="url(#eg2)"/>
<path d="M9 13c0 4 3 8 8 8 2 0 4-.8 5-1.600-2 3-5.500 4.700-9 4.300C8 23 4.500 19 4.500 15c0-3 2-5.500 5-6-.5 1-.5 2.500-.5 4z" fill="#1565b8"/>
<path d="M14 14c-.5 1 1 2.500 3.500 2.500 3 0 6-2 6-6 0 5-3 8.500-7 9.500-4 .5-7.500-3-7.500-7 0-1.500.5-3 1-3.500 2 0 4.500 1.500 4.500 3 0 .7-.2 1.100-.5 1.500z" fill="#111"/>
</svg>
<svg style="left:457px;top:739px" width="22" height="18" viewBox="0 0 22 18">
<path d="M0 .3h8.500l1.500 1.700h12V6H0z" fill="#e6a224"/><path d="M0 2.500h22V18H0z" fill="#ffd766"/><path d="M0 2.500h22v1.500H0z" fill="#f5c64c"/>
<path d="M3.800 18v-8h14.200v8h-3.800v-4.500h-6.600V18z" fill="#4595dc"/></svg>
<svg style="left:505px;top:737px" width="24" height="22" viewBox="0 0 24 22">
<rect x="6" y="0" width="18" height="21.500" rx="1.200" fill="#21a366"/><rect x="15" y="0" width="9" height="5.400" fill="#33c481"/><rect x="6" y="5.400" width="9" height="5.400" fill="#107c41"/><rect x="15" y="10.800" width="9" height="5.400" fill="#107c41"/><rect x="6" y="16.200" width="18" height="5.300" fill="#185c37"/><rect x="15" y="5.400" width="9" height="5.400" fill="#21a366"/><rect x="6" y="10.800" width="9" height="5.400" fill="#168a4a"/>
<rect x="0" y="4.800" width="12.300" height="12.300" rx="1" fill="#107c41"/><path d="M3.600 7.600l5.100 6.800M8.700 7.600l-5.100 6.800" stroke="#fff" stroke-width="1.700"/></svg>
<svg style="left:548px;top:730px" width="36" height="34" viewBox="0 0 36 34">
<defs><linearGradient id="fg1" x1="0.85" y1="0.05" x2="0.25" y2="1"><stop offset="0" stop-color="#fff36b"/><stop offset="0.28" stop-color="#ffbd2e"/><stop offset="0.55" stop-color="#ff7a1f"/><stop offset="0.8" stop-color="#ff3647"/><stop offset="1" stop-color="#e31587"/></linearGradient>
<linearGradient id="fg2" x1="0.6" y1="0" x2="0.4" y2="1"><stop offset="0" stop-color="#a83ff0"/><stop offset="1" stop-color="#4a55e8"/></linearGradient></defs>
<path d="M21.300 5.800c1.500 2.200 3.500 3.200 5 5.400 1.800 2.300 2.800 5 2.800 7.800 0 5.800-4.900 10-11.300 10S6.600 24.800 6.600 19c0-3 .7-5.600 2.400-7.600l1-1.500 1 1.800 1.600-1.600 1.200 2.300c1.200-.3 2.500.2 3.400.6 1.200-1.200 1.600-2.800 1.600-4.400.7-1 1.700-1.800 2.500-2.800z" fill="url(#fg1)"/>
<ellipse cx="18" cy="17.200" rx="4.300" ry="5" fill="url(#fg2)"/>
<path d="M12.500 13.200c1.800-.4 3.600.1 4.600 1.200-1.800.2-3.300 1.500-3.700 3.200-.6-1.500-1-3-0.900-4.400z" fill="#ff9a2e"/>
<path d="M18 12.300c1.600.1 2.800 1 3.400 2.300l-1.500-.3c.3.500.4 1 .4 1.500-.7-1.300-1.700-2.200-2.300-3.500z" fill="#ffb14a"/>
</svg>
<svg style="left:603px;top:736px" width="24" height="24" viewBox="0 0 24 24">
<path d="M2.040 6.250A11.500 11.500 0 0 1 21.960 6.250L12 6.250A5.750 5.750 0 0 0 7.020 14.875z" fill="#ea4335"/>
<path d="M21.960 6.250A11.500 11.500 0 0 1 12 23.500L16.980 14.875A5.750 5.750 0 0 0 12 6.250z" fill="#fbbc04"/>
<path d="M12 23.500A11.500 11.500 0 0 1 2.040 6.250L7.020 14.875A5.750 5.750 0 0 0 16.980 14.875z" fill="#34a853"/>
<circle cx="12" cy="12" r="5.750" fill="#fff"/><circle cx="12" cy="12" r="4.500" fill="#4285f4"/></svg>
<svg style="left:652px;top:736px" width="24" height="22" viewBox="0 0 24 22">
<rect x="6.500" y=".5" width="17.500" height="21.500" rx="1.200" fill="#2b7cd3"/><rect x="6.500" y=".5" width="17.500" height="5.400" fill="#41a5ee"/><rect x="6.500" y="5.900" width="17.500" height="5.400" fill="#2b7cd3"/><rect x="6.500" y="11.300" width="17.500" height="5.400" fill="#185abd"/><rect x="6.500" y="16.700" width="17.500" height="5.300" fill="#103f91"/>
<rect x="0" y="5" width="12.400" height="12.600" rx="1" fill="#185abd"/><path d="M2.300 7.800l1.700 7 2.200-6.200 2.200 6.200 1.700-7" stroke="#fff" stroke-width="1.500" fill="none"/></svg>
<svg style="left:701px;top:736px" width="24" height="24" viewBox="0 0 24 24">
<circle cx="12" cy="11.500" r="11.500" fill="#1ed760"/>
<path d="M5.500 8.300c4.500-1.300 9.500-.9 13.300 1.300" stroke="#111" stroke-width="2.200" fill="none" stroke-linecap="round"/>
<path d="M6.200 12.100c3.800-1.100 7.800-.7 11.200 1.200" stroke="#111" stroke-width="1.800" fill="none" stroke-linecap="round"/>
<path d="M6.800 15.500c3.200-.9 6.300-.6 9.200 1" stroke="#111" stroke-width="1.500" fill="none" stroke-linecap="round"/></svg>
<svg style="left:743px;top:730px" width="36" height="34" viewBox="0 0 36 34">
<defs><linearGradient id="pg1" x1="0.2" y1="0" x2="0.8" y2="1"><stop offset="0" stop-color="#f2f8fc"/><stop offset="0.6" stop-color="#d3e4f1"/><stop offset="1" stop-color="#9cc4e4"/></linearGradient></defs>
<g transform="rotate(-22 17.800 19.200)"><ellipse cx="17.800" cy="19.200" rx="11.400" ry="8" fill="url(#pg1)"/></g>
<path d="M6.500 24.500l5-2.800 2.300 1.500-1.500 3.300-3 .8z" fill="#111"/>
<circle cx="17" cy="20.600" r="1.600" fill="#0c1c2c"/>
<circle cx="11" cy="19" r="1.800" fill="#e0564a"/><circle cx="14.800" cy="15.400" r="1.900" fill="#5cbf3c"/><circle cx="19.500" cy="13.700" r="2" fill="#f7b733"/>
<path d="M25.300 12l1.700.8-7.500 16.500-1.600.6 .4-1.900z" fill="#e8984c"/><path d="M25 11.500l2.200 1-.9 2-2.200-1z" fill="#b4bccb"/>
<path d="M24.600 6.500c2-.8 5 .8 6 3.200l-3.500 3-2.300-1.100c-.5-1.600-.6-3.400-.2-5.100z" fill="#e9b987"/>
</svg>
<div class="a" style="left:799px;top:736px;width:24px;height:24px;background:#fff;overflow:hidden"><span class="a" style="left:1px;top:5px;font-size:15px;line-height:15px;font-weight:bold;font-style:italic;color:#1a3f9c;-webkit-text-stroke:0.5px #1a3f9c;letter-spacing:-1.1px;transform-origin:0 0;transform:scaleX(0.93)">SRi</span><span class="a" style="left:19.500px;top:6.500px;width:3px;height:3px;border-radius:2px;background:#e0203a"></span></div>
<div class="a" style="left:497px;top:766px;width:40px;height:2px;background:#76b9ed"></div>
<div class="a" style="left:693px;top:766px;width:40px;height:2px;background:#76b9ed"></div>
<div class="a" style="left:742px;top:766px;width:40px;height:2px;background:#76b9ed"></div>
<div class="a" style="left:787px;top:766px;width:48px;height:2px;background:#76b9ed"></div>
<svg style="left:1110px;top:732px" width="100" height="32" viewBox="0 0 100 32" fill="none" stroke="#fff" stroke-width="1.100">
<path d="M7 19l6.100-6.500 6 6.500" stroke-width="1.300"/>
<rect x="32.400" y="12.600" width="7.300" height="7.300" rx="1.600"/><path d="M39.900 15l3-1.600v5.200l-3-1.600"/><path d="M32.700 10.300c1.500-2.800 6.500-2.800 8.100 0M32.700 22.200c1.500 2.800 6.500 2.800 8.100 0"/>
<path d="M57 10.400h11.700v9.500H55.300"/><path d="M61.800 19.900v2.600M58 22.500h7"/><rect x="53.300" y="10.400" width="3.700" height="4.700"/><path d="M55.300 15.100v7.700"/><path d="M54.300 12.500h1.800" stroke-width="0.900"/>
<path d="M77.300 13.700h2l3.300-3.300v11.200l-3.300-3.300h-2z"/><path d="M85 13.300c1 1.500 1 3.900 0 5.400"/><path d="M87.800 10.800c2.300 2.900 2.300 7.500 0 10.400" stroke="#9a9a9a"/><path d="M90.800 8.800c3.200 4.200 3.200 10.200 0 14.400" stroke="#5a5a5a"/>
</svg>
<div class="t" style="left:1215.70px;top:739px;color:#fff;"><span style="display:inline-block;letter-spacing:-0.4px;transform-origin:0 0;transform:scaleX(0.7869);margin-right:-4.862px">ESP</span></div>
<div class="t" style="left:1262.00px;top:731px;color:#fff;letter-spacing:-0.696px">16:20</div>
<div class="t" style="left:1249.50px;top:749px;color:#fff;letter-spacing:-0.148px">30/7/2024</div>
<svg style="left:1319px;top:740px" width="17" height="17" viewBox="0 0 17 17"><path d="M.5.500h15v11h-5.500l-2 2.500-2-2.500H.5z" stroke="#fff" stroke-width="1" fill="none"/></svg>
<div class="a" style="left:1355px;top:728px;width:1px;height:40px;background:#4a4a4a"></div>
</body></html>
